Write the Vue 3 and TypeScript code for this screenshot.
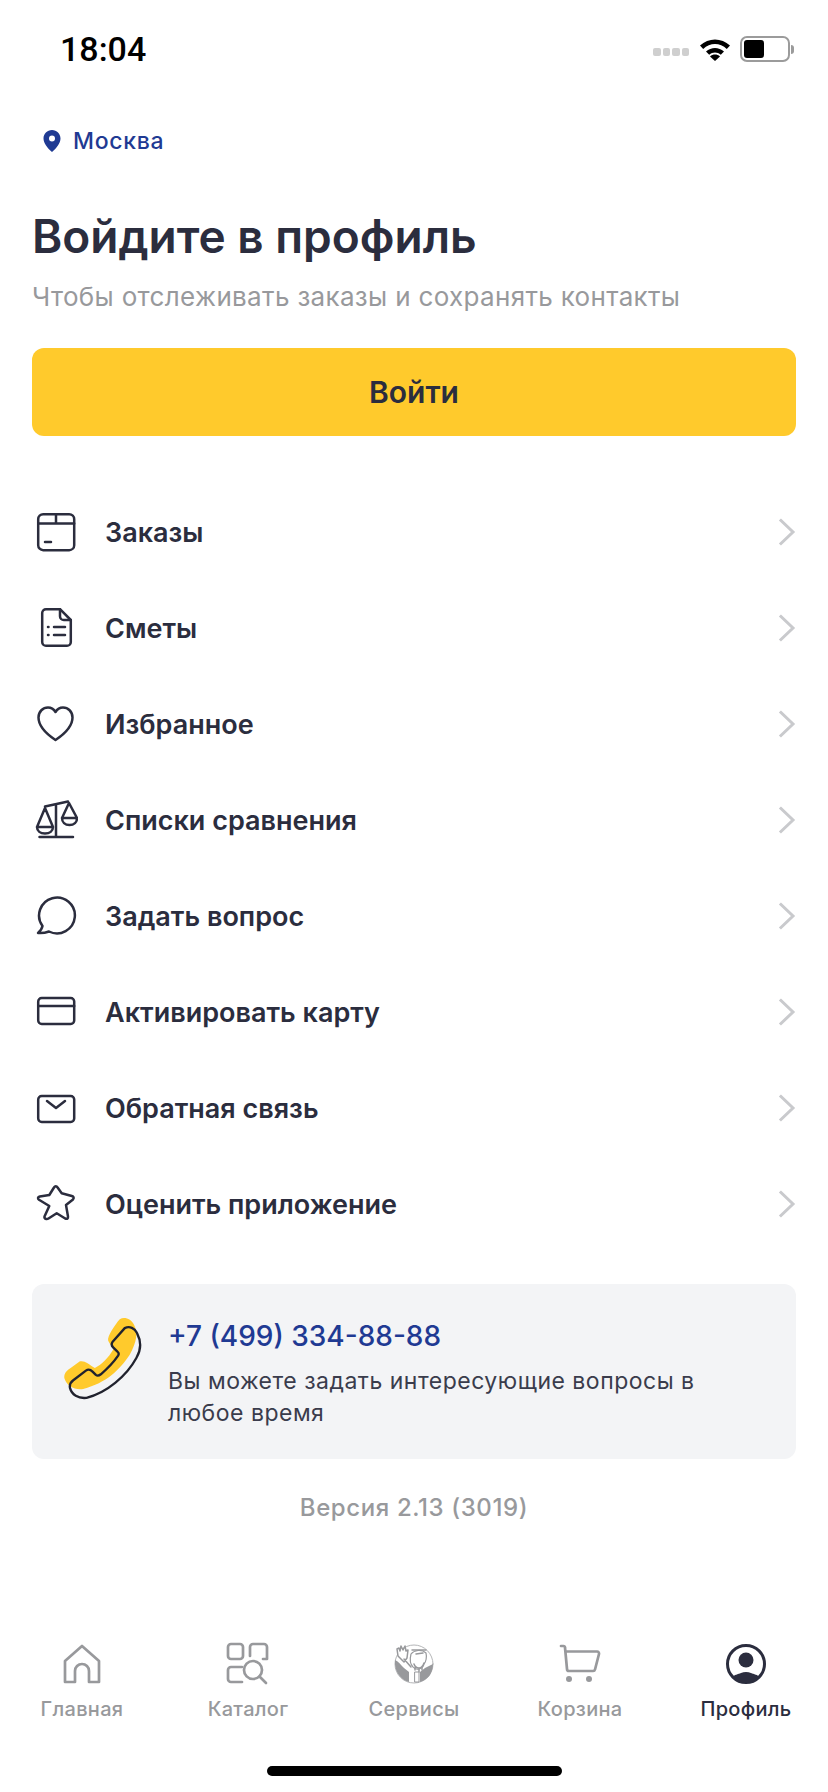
<script setup lang="ts">
const menu = [
  { label: 'Заказы', icon: 'box' },
  { label: 'Сметы', icon: 'doc' },
  { label: 'Избранное', icon: 'heart' },
  { label: 'Списки сравнения', icon: 'scales' },
  { label: 'Задать вопрос', icon: 'chat' },
  { label: 'Активировать карту', icon: 'card' },
  { label: 'Обратная связь', icon: 'mail' },
  { label: 'Оценить приложение', icon: 'star' },
]

const tabs = [
  { label: 'Главная', icon: 'home', active: false },
  { label: 'Каталог', icon: 'catalog', active: false },
  { label: 'Сервисы', icon: 'services', active: false },
  { label: 'Корзина', icon: 'cart', active: false },
  { label: 'Профиль', icon: 'profile', active: true },
]
</script>

<template>
  <div class="screen">
    <div class="status">
      <span class="time">18:04</span>
      <div class="status-icons">
        <div class="signal"><i></i><i></i><i></i><i></i></div>
        <svg width="32" height="24" viewBox="0 0 32 24">
          <path d="M1 8.5C9.5 .5 22.5 .5 31 8.5l-3.2 3.4C21 5.5 11 5.5 4.2 11.9z" fill="#000" />
          <path d="M7 14.5c5.2-4.8 12.8-4.8 18 0l-3.2 3.3c-3.4-3-8.2-3-11.6 0z" fill="#000" />
          <path d="M16 24l-5-4.6c2.9-2.4 7.1-2.4 10 0z" fill="#000" />
        </svg>
        <div class="battery"><div class="battery-level"></div></div>
        <div class="battery-cap"></div>
      </div>
    </div>

    <div class="city">
      <svg width="18" height="22" viewBox="0 0 18 22">
        <path fill-rule="evenodd" d="M9 0c4.8 0 8.5 3.7 8.5 8.5 0 4.8-4 9.5-8.5 13.5C4.5 18 .5 13.3 .5 8.5.5 3.7 4.2 0 9 0zm0 5.5a3 3 0 1 0 0 6 3 3 0 0 0 0-6z" fill="#1f3a93" />
      </svg>
      <span>Москва</span>
    </div>

    <h1>Войдите в профиль</h1>
    <p class="subtitle">Чтобы отслеживать заказы и сохранять контакты</p>
    <button class="login">Войти</button>

    <ul class="menu">
      <li v-for="item in menu" :key="item.label">
        <svg class="menu-icon" width="44" height="44" viewBox="0 0 44 44" fill="none" stroke="#2b2d3e" stroke-width="2.5" stroke-linecap="round" stroke-linejoin="round">
          <template v-if="item.icon === 'box'">
            <rect x="4.2" y="3.2" width="36" height="36" rx="5" />
            <path d="M4.2 12.5h36M22 3.2v9.3M11 31h6" />
          </template>
          <template v-else-if="item.icon === 'doc'">
            <path d="M12 2.2h14l10.8 10.8v22a3.8 3.8 0 0 1-3.8 3.8H12a3.8 3.8 0 0 1-3.8-3.8V6a3.8 3.8 0 0 1 3.8-3.8z" />
            <path d="M26 2.2v7a3.8 3.8 0 0 0 3.8 3.8h7M14 20h.5M14 28h.5M20 20h11M20 28h11" />
          </template>
          <path v-else-if="item.icon === 'heart'" d="M21.5 37C12.5 31 4.5 24 4.5 14.5 4.5 8.5 9 4.5 14 4.5c3.4 0 5.8 1.7 7.5 4.5 1.700-2.800 4.100-4.500 7.500-4.500 5 0 9.500 4 9.500 10 0 9.500-8 16.500-17 22.500z" />
          <template v-else-if="item.icon === 'scales'">
            <path d="M22 5.5V38M5.5 38h33.500M11 7.500L34 2.500" />
            <path d="M11 9L3 28h16zM3 28c0 4 3.500 6.500 8 6.500s8-2.500 8-6.500M35 4l-7 15h15zM28 19c0 4 3 7 7.500 7s7.500-3 7.500-7" />
          </template>
          <path v-else-if="item.icon === 'chat'" d="M8.500 31A17.900 17.900 0 1 1 15 36.500C11 38 7.500 38.300 4 38c2.500-2 4-4.500 4.500-7z" />
          <template v-else-if="item.icon === 'card'">
            <rect x="4.200" y="7" width="36" height="26" rx="3.500" />
            <path d="M4.200 15h36" />
          </template>
          <template v-else-if="item.icon === 'mail'">
            <rect x="4.200" y="9" width="36" height="26" rx="3.500" />
            <path d="M13 14l9 7 9-7" />
          </template>
          <path v-else d="M20 4.500C21 2.800 22.600 2.800 23.600 4.500L27.700 10.300 37.800 13C39.800 13.600 40.200 15 39 16.400L32 22 34 33.500C34.300 35.600 33 36.300 31.200 35.500L22.700 30.300 14.500 35.500C12.800 36.600 10 36 10.500 33.500L15.300 23 5 16.800C3.400 15.500 3.800 14 5.800 13.600L15.300 12z" />
        </svg>
        <span class="menu-label">{{ item.label }}</span>
        <svg class="chevron" width="18" height="28" viewBox="0 0 18 28" fill="none" stroke="#c9cacd" stroke-width="3" stroke-linecap="square">
          <path d="M3 2.500l12 11.500-12 11.500" />
        </svg>
      </li>
    </ul>

    <div class="support">
      <svg class="support-icon" width="83" height="90" viewBox="120 130 250 270" fill="none">
        <path d="M300 148C315 140 335 148 343 165 355 190 352 215 330 255 300 300 260 340 190 358 165 362 140 350 133 325 132 312 140 303 150 297L180 275C195 272 205 283 225 295 245 285 265 265 280 240 283 232 270 225 265 212 262 200 285 165 300 148z" fill="#ffca2c" />
        <path d="M315 175C330 168 345 175 352 190 365 215 365 240 350 265 320 320 260 370 200 385 175 388 155 375 150 355 148 345 152 338 160 332L198 303C205 298 212 300 218 306L228 316C233 320 238 318 243 314 262 298 280 280 295 258 298 253 297 249 293 246L280 233C275 228 274 223 278 217z" stroke="#20222e" stroke-width="7" stroke-linejoin="round" />
      </svg>
      <div class="support-text">
        <div class="phone">+7 (499) 334-88-88</div>
        <div class="hint">Вы можете задать интересующие вопросы в любое время</div>
      </div>
    </div>

    <div class="version">Версия 2.13 (3019)</div>

    <nav class="tabbar">
      <div v-for="tab in tabs" :key="tab.label" class="tab" :class="{ active: tab.active }">
        <svg width="44" height="44" viewBox="0 0 44 44" fill="none" stroke="#98999c" stroke-width="2.7" stroke-linejoin="round" stroke-linecap="round">
          <path v-if="tab.icon === 'home'" d="M5 40V19L22 4l17 15v21H29V29a7 7 0 0 0-14 0v11z" />
          <template v-else-if="tab.icon === 'catalog'">
            <rect x="2" y="2" width="15" height="15" rx="3" />
            <path d="M24 14V5a3 3 0 0 1 3-3h11a3 3 0 0 1 3 3v12h-4" />
            <path d="M16 40H5a3 3 0 0 1-3-3v-9a3 3 0 0 1 3-3h11" />
            <circle cx="27" cy="28" r="9" />
            <path d="M33.500 34.500L40 41" />
          </template>
          <template v-else-if="tab.icon === 'services'">
            <circle cx="22" cy="22" r="19" fill="#fff" stroke="#b5b6b8" stroke-width="1" />
            <path d="M3 18c3 1 6 5 9 8l5 4v10C9 38 2 30 3 18zM33 26l8-4c0 9-5 16-13 18V30z" fill="#98999c" stroke="none" />
            <path d="M6 14l-1-7 2-1 1 3 1-5 2 4 2-4 1 5 2-1-1 8-3 4zM12 17l7 8" stroke-width="1.500" fill="#fff" />
            <path d="M19 12c3-4 11-5 15-1 1 4 0 9-2 11-1 5-8 7-11 3-3-3-3-9-2-13z" stroke-width="1.200" fill="#fff" />
            <path d="M22 22c1 3 2 4 5 4 3 0 4-2 5-5M23 25v3M27 27v3M30 25v3M24 12l7-1M20 8h14" stroke-width="1.500" />
            <path d="M23 30h4v10h-4z" fill="#fff" stroke-width="1" />
          </template>
          <template v-else-if="tab.icon === 'cart'">
            <path d="M3 4h2.500A1.500 1.500 0 0 1 7 5.500L9 27a2 2 0 0 0 2 2h24a2 2 0 0 0 2-1.500l4-15.500a2 2 0 0 0-2-2.500H8" />
            <circle cx="11" cy="37" r="3" fill="#98999c" stroke="none" />
            <circle cx="31" cy="37" r="3" fill="#98999c" stroke="none" />
          </template>
          <template v-else>
            <circle cx="22" cy="22" r="18.500" stroke="#2b2d3e" stroke-width="3" />
            <circle cx="22" cy="18" r="7.500" fill="#2b2d3e" stroke="none" />
            <path d="M9 34.500c3-2.500 5-2 8-3.500 3-1.500 7-1.500 10 0 3 1.500 5 1 8 3.500-3.500 4-8 6-13 6s-9.500-2-13-6z" fill="#2b2d3e" stroke="none" />
          </template>
        </svg>
        <span class="tab-label">{{ tab.label }}</span>
      </div>
    </nav>
    <div class="home-indicator"></div>
  </div>
</template>

<style>
body {
  margin: 0;
  background: #fff;
}
</style>

<style scoped>
.screen {
  width: 828px;
  height: 1792px;
  display: flex;
  flex-direction: column;
  font-family: Inter, "Noto Sans", sans-serif;
  color: #2b2d3e;
  overflow: hidden;
}

.status {
  display: flex;
  justify-content: space-between;
  align-items: center;
  height: 50px;
  padding: 24px 34px 0 60px;
}

.time {
  font-size: 34px;
  font-weight: 500;
  color: #000;
  font-family: Roboto, sans-serif;
}

.status-icons {
  display: flex;
  align-items: center;
}

.signal {
  display: flex;
  gap: 2px;
  margin-right: 10px;
  margin-top: 5px;
}

.signal i {
  width: 7.5px;
  height: 8px;
  border-radius: 2px;
  background: #cfcfcf;
}

.battery {
  width: 50px;
  height: 26px;
  margin-left: 9px;
  box-sizing: border-box;
  border: 2px solid #9b9b9b;
  border-radius: 7px;
  padding: 2px;
}

.battery-level {
  width: 20px;
  height: 100%;
  background: #000;
  border-radius: 3px;
}

.battery-cap {
  width: 3px;
  height: 9px;
  margin-left: 1px;
  background: #9b9b9b;
  border-radius: 0 3px 3px 0;
}

.city {
  display: flex;
  align-items: center;
  gap: 12px;
  margin: 51px 0 0 43px;
  height: 32px;
  font-size: 23px;
  font-weight: 500;
  letter-spacing: 0.7px;
  color: #1f3a93;
}

h1 {
  margin: 50px 0 0 32px;
  font-size: 46px;
  line-height: 58px;
  font-weight: 600;
}

.subtitle {
  margin: 16px 0 0 32px;
  font-size: 26px;
  line-height: 32px;
  letter-spacing: 0.33px;
  color: #98999c;
}

.login {
  margin: 35px 32px 0;
  height: 88px;
  border: none;
  border-radius: 12px;
  background: #ffca2c;
  color: #2b2d3e;
  font-family: inherit;
  font-size: 30px;
  font-weight: 600;
}

.menu {
  list-style: none;
  margin: 49px 0 0;
  padding: 0 32px 0 34px;
}

.menu li {
  display: flex;
  align-items: center;
  height: 96px;
}

.menu-icon {
  flex: none;
}

.menu-label {
  flex: 1;
  margin: -2px 0 0 27px;
  font-size: 27px;
  font-weight: 600;
}

.chevron {
  margin-top: -2px;
}

.support {
  display: flex;
  align-items: flex-start;
  height: 175px;
  margin: 31px 32px 0;
  padding: 29px 40px 0 28px;
  box-sizing: border-box;
  background: #f3f4f6;
  border-radius: 12px;
}

.support-icon {
  flex: none;
}

.support-text {
  margin: 5px 0 0 25px;
}

.phone {
  font-size: 28px;
  line-height: 36px;
  font-weight: 500;
  color: #1f3a93;
}

.hint {
  margin-top: 11px;
  font-size: 23px;
  line-height: 32px;
  letter-spacing: 0.5px;
  color: #3a3c4c;
}

.version {
  margin-top: 34px;
  text-align: center;
  font-size: 24px;
  line-height: 30px;
  font-weight: 500;
  letter-spacing: 0.6px;
  color: #98999c;
}

.tabbar {
  display: flex;
  justify-content: space-between;
  margin-top: 119px;
  padding: 0 12px;
}

.tab {
  width: 140px;
  display: flex;
  flex-direction: column;
  align-items: center;
  gap: 11px;
}

.tab-label {
  font-size: 20px;
  line-height: 24px;
  letter-spacing: 0.3px;
  font-weight: 500;
  color: #98999c;
}

.tab.active .tab-label {
  color: #2b2d3e;
}

.home-indicator {
  width: 295px;
  height: 10px;
  margin: 45px auto 0;
  border-radius: 5px;
  background: #000;
}
</style>
